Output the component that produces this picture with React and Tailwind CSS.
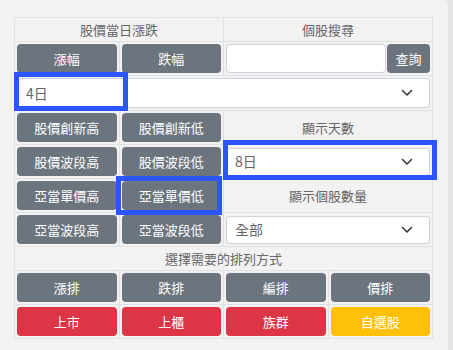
import React from "react";

const font = { fontFamily: '"Noto Sans CJK TC", "Noto Sans", sans-serif' };

function Btn({ children, color = "gray" }) {
  const bg =
    color === "red"
      ? "bg-[#dc3545]"
      : color === "yellow"
      ? "bg-[#ffc107]"
      : "bg-[#6c757d]";
  return (
    <button className={`w-full h-[29px] rounded-[4px] ${bg} text-white text-[13px] leading-none`}>
      {children}
    </button>
  );
}

function Select({ value, h = "h-[28px]" }) {
  return (
    <div className={`w-full ${h} bg-white border border-[#ced4da] rounded-[4px] flex items-center justify-between pl-[8px] pr-[16px] text-[14px] text-[#666]`}>
      <span>{value}</span>
      <svg width="12" height="8" viewBox="0 0 12 8" fill="none">
        <path d="M1.5 1.5 6 6l4.5-4.5" stroke="#343a40" strokeWidth="1.6" strokeLinecap="round" strokeLinejoin="round" />
      </svg>
    </div>
  );
}

const td = "border border-[#dee2e6] p-[2px] align-middle";
const label = "border border-[#dee2e6] text-center text-[13px] text-[#666] h-[24px] leading-[20px] p-0";

export default function App() {
  return (
    <div className="w-[453px] h-[350px] bg-[#e6e6e6]" style={font}>
      <div className="relative w-[448px] h-[350px] bg-[#f2f2f2] rounded-tr-[6px] pl-[14px] pt-[17px]">
        <table className="w-[419px] table-fixed border-collapse">
          <tbody>
            <tr>
              <td colSpan={2} className={label}>股價當日漲跌</td>
              <td colSpan={2} className={label}>個股搜尋</td>
            </tr>
            <tr>
              <td className={td}><Btn>漲幅</Btn></td>
              <td className={td}><Btn>跌幅</Btn></td>
              <td colSpan={2} className={td}>
                <div className="flex gap-[1px]">
                  <input className="flex-1 min-w-0 h-[29px] bg-white border border-[#ced4da] rounded-[4px]" />
                  <button className="w-[43px] h-[29px] rounded-[4px] bg-[#6c757d] text-white text-[13px]">查詢</button>
                </div>
              </td>
            </tr>
            <tr>
              <td colSpan={4} className={td}>
                <Select value="4日" h="h-[30px]" />
              </td>
            </tr>
            <tr>
              <td className={td}><Btn>股價創新高</Btn></td>
              <td className={td}><Btn>股價創新低</Btn></td>
              <td colSpan={2} className={label}>顯示天數</td>
            </tr>
            <tr>
              <td className={td}><Btn>股價波段高</Btn></td>
              <td className={td}><Btn>股價波段低</Btn></td>
              <td colSpan={2} className={td}><Select value="8日" /></td>
            </tr>
            <tr>
              <td className={td}><Btn>亞當單價高</Btn></td>
              <td className={td}><Btn>亞當單價低</Btn></td>
              <td colSpan={2} className={label}>顯示個股數量</td>
            </tr>
            <tr>
              <td className={td}><Btn>亞當波段高</Btn></td>
              <td className={td}><Btn>亞當波段低</Btn></td>
              <td colSpan={2} className={td}><Select value="全部" /></td>
            </tr>
            <tr>
              <td colSpan={4} className={label}>選擇需要的排列方式</td>
            </tr>
            <tr>
              <td className={td}><Btn>漲排</Btn></td>
              <td className={td}><Btn>跌排</Btn></td>
              <td className={td}><Btn>編排</Btn></td>
              <td className={td}><Btn>價排</Btn></td>
            </tr>
            <tr>
              <td className={td}><Btn color="red">上市</Btn></td>
              <td className={td}><Btn color="red">上櫃</Btn></td>
              <td className={td}><Btn color="red">族群</Btn></td>
              <td className={td}><Btn color="yellow">自選股</Btn></td>
            </tr>
          </tbody>
        </table>

        {/* highlight boxes */}
        <div className="absolute left-[14px] top-[72px] w-[114px] h-[39px] border-[5px] border-[#2a55ff] pointer-events-none" />
        <div className="absolute left-[223px] top-[140px] w-[214px] h-[40px] border-[5px] border-[#2a55ff] pointer-events-none" />
        <div className="absolute left-[116px] top-[176px] w-[106px] h-[39px] border-[5px] border-[#2a55ff] pointer-events-none" />
      </div>
    </div>
  );
}
